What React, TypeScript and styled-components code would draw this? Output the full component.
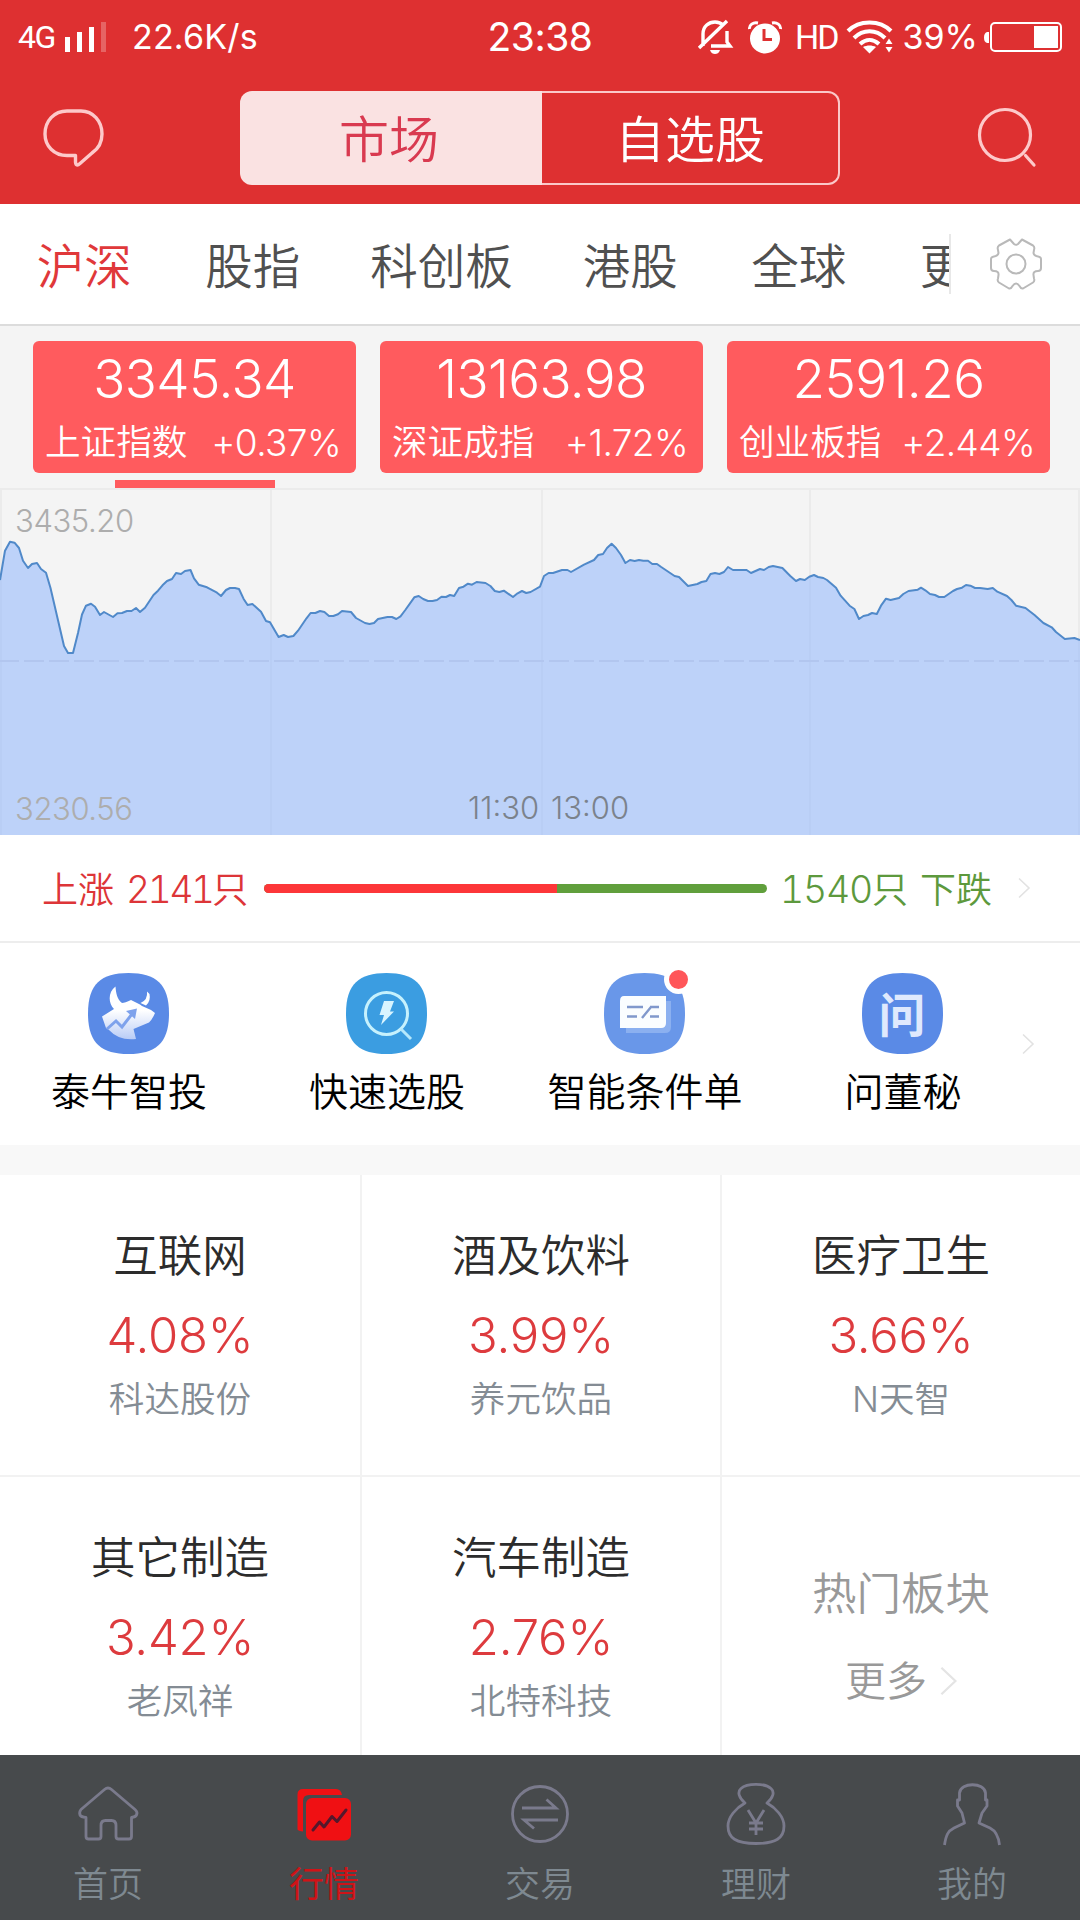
import React from "react";
import styled, { createGlobalStyle } from "styled-components";

const GlobalStyle = createGlobalStyle`
  * { box-sizing: border-box; }
  body { margin: 0; background: #fff; }
`;

const Screen = styled.div`
  width: 1080px;
  height: 1920px;
  display: flex;
  flex-direction: column;
  overflow: hidden;
  background: #fff;
  font-family: Inter, "Noto Sans CJK SC", sans-serif;
  font-weight: 350;
  white-space: nowrap;
`;

const Header = styled.header`
  height: 204px;
  flex: none;
  background: #de3031;
  color: #fff;
`;

const StatusBar = styled.div`
  height: 74px;
  display: grid;
  grid-template-columns: 1fr auto 1fr;
  align-items: center;
  padding: 0 18px;
`;

const StatusGroup = styled.div<{ $end?: boolean }>`
  display: flex;
  align-items: center;
  justify-content: ${(p) => (p.$end ? "flex-end" : "flex-start")};
`;

const StatusText = styled.span<{ $size: number; $ml?: number; $track?: number; $narrow?: boolean }>`
  font-family: ${(p) => (p.$narrow ? "Roboto" : "Inter")}, sans-serif;
  font-size: ${(p) => p.$size}px;
  font-weight: 400;
  line-height: 74px;
  margin-left: ${(p) => p.$ml ?? 0}px;
  letter-spacing: ${(p) => p.$track ?? 0}px;
`;

const Icon = styled.svg<{ $ml?: number }>`
  display: block;
  flex: none;
  overflow: visible;
  margin-left: ${(p) => p.$ml ?? 0}px;
`;

const TitleBar = styled.div`
  height: 130px;
  display: flex;
  align-items: flex-start;
  justify-content: space-between;
  padding: 17px 43px 0;
`;

const IconButton = styled.button<{ $pt: number }>`
  border: 0;
  background: none;
  padding: ${(p) => p.$pt}px 0 0;
  width: 62px;
`;

const Segmented = styled.div`
  width: 600px;
  height: 94px;
  display: flex;
`;

const Segment = styled.div<{ $active?: boolean }>`
  flex: none;
  width: ${(p) => (p.$active ? 302 : 298)}px;
  padding-right: ${(p) => (p.$active ? 4 : 0)}px;
  text-align: center;
  font-size: 50px;
  line-height: ${(p) => (p.$active ? 98 : 94)}px;
  color: ${(p) => (p.$active ? "#d93a50" : "#fff")};
  background: ${(p) => (p.$active ? "#fae2e2" : "transparent")};
  border: ${(p) => (p.$active ? 0 : 2)}px solid #fbc8c9;
  border-left: 0;
  border-radius: ${(p) => (p.$active ? "12px 0 0 12px" : "0 12px 12px 0")};
`;

const MarketTabs = styled.nav`
  height: 122px;
  flex: none;
  display: flex;
  align-items: center;
  border-bottom: 2px solid #dcdcdc;
`;

const TabScroller = styled.div`
  width: 951px;
  height: 60px;
  display: flex;
  overflow: hidden;
  border-right: 2px solid #e8e8e8;
`;

const MarketTab = styled.div<{ $wide?: boolean; $active?: boolean }>`
  flex: none;
  width: ${(p) => (p.$wide ? 209 : 168.5)}px;
  text-align: center;
  font-size: 47.5px;
  line-height: 66px;
  color: ${(p) => (p.$active ? "#e0383a" : "#505050")};
`;

const SettingsButton = styled.button`
  flex: 1;
  height: 60px;
  display: flex;
  justify-content: center;
  align-items: center;
  border: 0;
  padding: 0;
  background: none;
`;

const IndexPanel = styled.section`
  height: 162px;
  flex: none;
  padding: 15px 30px 0 33px;
  background: #f4f4f4;
`;

const IndexCards = styled.div`
  display: grid;
  grid-template-columns: repeat(3, 323px);
  column-gap: 24px;
`;

const IndexCard = styled.div`
  height: 132px;
  border-radius: 6px;
  background: #ff5b5e;
  color: #fff;
`;

const IndexValue = styled.div`
  height: 74px;
  line-height: 77px;
  text-align: center;
  font-size: 53px;
  letter-spacing: -0.6px;
`;

const IndexMeta = styled.div`
  display: flex;
  justify-content: space-between;
  padding: 0 15px 0 12px;
  line-height: 56px;
`;

const IndexName = styled.span`
  font-size: 35.6px;
`;

const IndexChange = styled.span`
  font-size: 37px;
  letter-spacing: -0.6px;
`;

const ActiveMark = styled.div`
  width: 160px;
  height: 8px;
  margin: 7px 0 0 82px;
  background: #ff5b5e;
`;

const ChartBox = styled.section`
  position: relative;
  height: 347px;
  flex: none;
  background: #f4f4f4;
`;

const ChartLabel = styled.span<{ $x: number; $y: number; $dark?: boolean }>`
  position: absolute;
  left: ${(p) => p.$x}px;
  top: ${(p) => p.$y}px;
  font-size: 31px;
  font-weight: 300;
  line-height: 36px;
  letter-spacing: ${(p) => (p.$dark ? 0 : -0.4)}px;
  color: ${(p) => (p.$dark ? "#7b828c" : "#adadad")};
`;

const BreadthRow = styled.section`
  height: 108px;
  flex: none;
  display: flex;
  align-items: center;
  padding: 0 50px 0 42px;
  border-bottom: 2px solid #ededed;
`;

const BreadthText = styled.span<{ $down?: boolean }>`
  display: flex;
  flex: none;
  align-items: baseline;
  gap: 12px;
  width: ${(p) => (p.$down ? "auto" : "222px")};
  margin-left: ${(p) => (p.$down ? "auto" : 0)};
  font-size: 36px;
  line-height: 106px;
  padding-top: 4px;
  color: ${(p) => (p.$down ? "#5d993d" : "#dd3538")};
`;

const Count = styled.span`
  display: flex;
  align-items: baseline;
`;

const CountNumber = styled.span<{ $track: number }>`
  font-size: 37.5px;
  font-variant-numeric: tabular-nums;
  letter-spacing: ${(p) => p.$track}px;
`;

const BreadthBar = styled.div`
  display: flex;
  flex: none;
  width: 503px;
  height: 9px;
  border-radius: 5px;
  overflow: hidden;
  background: #609f3c;
`;

const BreadthUp = styled.div`
  background: #fd3639;
`;

const Shortcuts = styled.section`
  height: 202px;
  flex: none;
  display: flex;
  align-items: flex-start;
  margin-left: -1px;
  padding-top: 30px;
`;

const Shortcut = styled.div`
  width: 258px;
  display: flex;
  flex-direction: column;
  align-items: center;
`;

const ShortcutTile = styled.div`
  position: relative;
  width: 81px;
  height: 81px;
`;

const TileGlyph = styled.span`
  position: absolute;
  inset: 0;
  text-align: center;
  font-size: 47px;
  line-height: 83px;
  font-weight: 700;
  color: #dfe9fd;
`;

const Badge = styled.span`
  position: absolute;
  right: -8px;
  top: -8px;
  width: 29px;
  height: 29px;
  border: 5px solid #fff;
  border-radius: 50%;
  background: #ff5659;
`;

const ShortcutName = styled.div`
  font-size: 39px;
  line-height: 50px;
  margin-top: 13px;
  padding-left: 2px;
  color: #000;
`;

const ShortcutMore = styled.div`
  padding-top: 61px;
`;

const Divider = styled.div`
  height: 30px;
  flex: none;
  background: #f8f8f8;
`;

const SectorGrid = styled.section`
  height: 580px;
  flex: none;
  display: grid;
  grid-template-columns: 362px 360px 358px;
  grid-template-rows: 302px 278px;
`;

const Sector = styled.div<{ $last?: boolean; $bottom?: boolean }>`
  display: flex;
  flex-direction: column;
  align-items: center;
  padding-top: 51px;
  border-right: ${(p) => (p.$last ? 0 : 2)}px solid #f2f2f2;
  border-bottom: ${(p) => (p.$bottom ? 0 : 2)}px solid #f2f2f2;
`;

const SectorName = styled.div`
  font-size: 44.5px;
  line-height: 60px;
  color: #2c2c2c;
`;

const SectorChange = styled.div`
  font-size: 49px;
  line-height: 60px;
  margin-top: 20px;
  letter-spacing: -0.2px;
  color: #dd3b3e;
`;

const SectorLeader = styled.div`
  font-size: 35.6px;
  line-height: 50px;
  margin-top: 9px;
  color: #848c94;
`;

const HotName = styled.div`
  font-size: 44.5px;
  line-height: 60px;
  margin-top: 36px;
  color: #999;
`;

const HotMore = styled.div`
  display: flex;
  align-items: center;
  font-size: 41px;
  line-height: 60px;
  margin-top: 27px;
  color: #999;
`;

const BottomNav = styled.nav`
  height: 165px;
  flex: none;
  display: grid;
  grid-template-columns: repeat(5, 216px);
  background: #474a4c;
`;

const NavItem = styled.div<{ $active?: boolean }>`
  display: flex;
  flex-direction: column;
  align-items: center;
  padding-top: 24px;
  font-weight: ${(p) => (p.$active ? 400 : 350)};
  color: ${(p) => (p.$active ? "#cf1317" : "#7e8991")};
`;

const NavLabel = styled.span`
  font-size: 35px;
  line-height: 48px;
  margin-top: 13px;
`;

const PRICE_POINTS =
  "0,92 5,62.7 10,53.7 14.5,54.7 19,60 23,72.7 28,80 32,76 37,75 41,81 46,84.7 50.5,100 64,158 68,165 73,165 78,145 82,126.5 86,117.7 91,115.7 95,118.7 100,127 104,124 113,129 117.5,125.3 122,125 127,123 131.5,123 136,120 140,124 145,119.7 153.5,107 158,102.7 162.5,97.3 167,93 172,91 176,85 181,86 185,83 190.5,82 194,90.3 198.7,96.7 207,99.3 217,104.7 221,108 226,102 230,100 235,100 239,101 243.5,110.7 247.6,117 252.4,116 261,123.7 266,133 270,134.3 278.6,149 283.7,147 288,149 293.4,148 298,142.7 306.5,130.3 310.6,125 315.4,125 320,123 324.4,124 329,128 333.3,128 338,126.3 342,123 351,124 356,130 365,135 369.5,136 374,135 378,131 387.4,129 392,129 396.3,131 400.5,128.3 405.3,122 414.3,109.3 418.7,108 423.2,111 428,113 432.5,113 437,112 441.5,108.7 446,109 450,107 454.2,108 459,100 463.5,98.7 468,95.7 472,96.7 476.6,94 485.5,95 490.4,98 494.8,103 499.3,104 503.8,102.7 513,109 517.6,105.3 522,103 526.2,105 530.6,104 540,98.7 544,88 548.6,85 553,85 562,82 567.5,82 571,84 584,76.7 594,72 598.2,67 603,66 607,60 611.6,55.7 616,60 621,67 625.4,75 630,72 634.7,73 639,72 643.3,72.7 648,72.7 652.3,76 657,76 661.2,79 674.6,88 679,89 688,98 697.4,96 701.5,94 706.3,93 710.5,86 715,85 719.4,86 724,84 728,79 733,82 746.6,82 751,85 760,81 764,82 768.7,79 773,78 782.4,80 790.3,88 796,93 800,91 804.8,92 809.3,88.7 814,87 818,89 823.4,90 827,92 836,99.7 840.6,107.7 849.6,117.7 854.4,121 859,131 863.4,128 868,127 872,125 876.8,126 881,117.7 886,110.7 890.6,112 899,110 903.3,106 908.5,103 917.8,101.7 921,99.7 925.3,102.3 930,106 935,107 939,109 944.3,109 953,103 957,101 962,99.7 966,97 970.4,97.7 975,100 980,100 987.7,101 992.8,100 997.3,103.7 1007,108 1011.4,112 1016,117.7 1025.5,120 1034.5,127 1043.4,135 1051.7,139.3 1056,144 1064.8,151 1074.4,150 1080,152";

const SignalIcon = () => (
  <Icon $ml={10} width="42" height="30" viewBox="0 0 42 30" fill="#fff">
    <rect x="0" y="15" width="5" height="15" />
    <rect x="12" y="10" width="5" height="20" />
    <rect x="24" y="5" width="5" height="25" />
    <rect x="36" y="0" width="5" height="30" opacity="0.25" />
  </Icon>
);

const MuteIcon = () => (
  <Icon width="34" height="34" viewBox="0 0 34 34" fill="none" stroke="#fff" strokeWidth="3.400">
    <path d="M5 26V14C5 6 11 2 17 2c4 0 6 1 8 3M29 11v11l3 4H13M1 28L29 1" />
    <path d="M12 30h10c-1 3-3 4-5 4s-4-1-5-4z" fill="#fff" stroke="none" />
  </Icon>
);

const AlarmIcon = () => (
  <Icon $ml={16} width="34" height="33" viewBox="0 0 34 33">
    <circle cx="17" cy="17.5" r="15" fill="#fff" />
    <path d="M1.5 8C1 4 5 1 10 2M32.500 8C33 4 29 1 24 2" stroke="#fff" strokeWidth="3" fill="none" />
    <path d="M16 8v10.500h8" stroke="#de3031" strokeWidth="3" fill="none" />
  </Icon>
);

const WifiIcon = () => (
  <Icon $ml={9} width="46" height="34" viewBox="0 0 46 34" fill="none" stroke="#fff" strokeWidth="4">
    <path d="M1 11C12-.5 33-.5 44 11M7 18c9-9 22-9 31 0M13 24c6-5.500 13-5.500 19 0" />
    <path d="M16 27c4-2 9-2 13 0l-6.500 6.500z" fill="#fff" stroke="none" />
    <path d="M38.500 24l3.500-5.500 3.500 5.500zM38.500 27l3.500 5.500 3.500-5.500z" fill="#fff" stroke="none" />
  </Icon>
);

const BatteryIcon = () => (
  <Icon $ml={6} width="78" height="30" viewBox="0 0 78 30">
    <path d="M5 10H3Q0 11 0 15.500T3 21H5z" fill="#fff" />
    <rect x="7" y="1" width="70" height="28" rx="4" fill="none" stroke="#fff" strokeWidth="2" />
    <rect x="50" y="4" width="24" height="22" fill="#fff" />
  </Icon>
);

const ChatIcon = () => (
  <Icon width="62" height="58" viewBox="0 0 62 58" fill="none" stroke="#fdc9ca" strokeWidth="3.400" strokeLinejoin="round">
    <path d="M24 2H38C50 2 59 12 59 25C59 34 55 40 49 44L37 54.500Q33 58 32.500 53V46.500H24C11 46.500 2 37 2 25C2 12 11 2 24 2z" />
  </Icon>
);

const SearchIcon = () => (
  <Icon $ml={3} width="59" height="59" viewBox="0 0 59 59" fill="none" stroke="#fdc9ca" strokeWidth="3.200" strokeLinecap="round">
    <ellipse cx="27" cy="27" rx="25.500" ry="25.500" />
    <path d="M47.500 47.500L56 57" />
  </Icon>
);

const GearIcon = () => (
  <Icon width="52" height="52" viewBox="0 0 52 52" fill="none" stroke="#b9b9b9" strokeWidth="2" strokeLinejoin="round">
    <path d="M20 1.500L24 6q2 1.500 4 0L32 1.500 43 7.500Q45 9 44 12L43.500 15Q44 18 48 18.500 51 19 51 21V30Q51 33 48 33 43 33 43.500 37L44 40.500Q45 43 43 44.500L33 50.500Q31 51 29.500 48 26 43 22.500 48 21 51 19 50.500L9 44.500Q7 43 8 40.500L8.500 37Q9 33 4 33 1 33 1 30V21Q1 19 4 18.500 8 18 8.500 15L8 12Q7 9 9 7.500z" />
    <circle cx="26" cy="26" r="9.500" />
  </Icon>
);

const ChevronIcon = ({ ml, size = 20, color = "#e2e2e2" }: { ml: number; size?: number; color?: string }) => (
  <Icon $ml={ml} width={size * 0.6} height={size} viewBox="0 0 12 20" fill="none" stroke={color} strokeWidth="1.600">
    <path d="M1 .5L11 10L1 19.500" />
  </Icon>
);

const TILE = "M40.500 0C68 0 81 11 81 40.500S68 81 40.500 81 0 70 0 40.500 13 0 40.500 0z";

const BullTile = () => (
  <Icon width="81" height="81" viewBox="0 0 81 81">
    <defs>
      <linearGradient id="bull" x1="0" y1="0" x2="0" y2="1">
        <stop offset="0.450" stopColor="#fff" />
        <stop offset="1" stopColor="#b9ccf6" />
      </linearGradient>
    </defs>
    <path d={TILE} fill="#5a8ae6" />
    <path fill="url(#bull)" d="M27.500 13.500C20 19 20 30 26 36L14 43.500L18 55L21 57Q31 68 48 66L45.500 56L61 49.500Q64 47 67 40L63 37L54 33L52 31.500L43 27Q37 30 34 30C29 26 28 20 27.500 13.500z" />
    <path fill="#fff" d="M59 18.500Q60 27 52.500 30L58 32.500Q63 28 61.500 21z" />
    <path d="M19 56L28 48L34 54L44 41" fill="none" stroke="#7ea2ec" strokeWidth="3" />
    <path d="M38 38L49 35.500L47 46z" fill="#7ea2ec" />
  </Icon>
);

const FastTile = () => (
  <Icon width="81" height="81" viewBox="0 0 81 81">
    <path d={TILE} fill="#3b9de1" />
    <circle cx="40.500" cy="40.500" r="21" fill="none" stroke="#c6f1fd" strokeWidth="3" />
    <path d="M55 56L65 66" stroke="#b5e8fc" strokeWidth="3" />
    <path d="M38 28H48L44 38.500H48L35 52L38 42H33.500z" fill="#d8f4ff" />
  </Icon>
);

const OrderTile = () => (
  <Icon width="81" height="81" viewBox="0 0 81 81">
    <path d={TILE} fill="#6997e9" />
    <path d="M22 28H67V54Q67 60 61 60H22z" fill="#8bb0f0" />
    <path d="M20 23H62V50Q62 55 57 55H16V28Q16 23 20 23z" fill="#fafdff" />
    <path d="M23 34H39M46 34H55M23 43.500H33M46 43.500H55M38 45L47 34" stroke="#8098cc" strokeWidth="2.400" fill="none" />
  </Icon>
);

const BlankTile = () => (
  <Icon width="81" height="81" viewBox="0 0 81 81">
    <path d={TILE} fill="#5a8ae6" />
  </Icon>
);

const NavSvg = ({ children }: { children: React.ReactNode }) => (
  <Icon width="64" height="68" viewBox="0 0 64 68" fill="none" stroke="#7a7a8c" strokeWidth="2.800" strokeLinejoin="round">
    {children}
  </Icon>
);

const HomeIcon = () => (
  <NavSvg>
    <path d="M28.500 10.500Q32 7.500 35.500 10.500L59 30.500Q62 33 60.500 36Q59.500 38 55.500 38.500V57.500Q55.500 60 53 60H42.500Q40 60 40 57.500V46.500Q40 41.500 35.500 41.500H29.500Q25 41.500 25 46.500V57.500Q25 60 22.500 60H12.500Q10 60 10 57.500V38.500Q5 38 4 36Q3 33 5 30.500z" />
  </NavSvg>
);

const QuotesIcon = () => (
  <NavSvg>
    <path d="M5.500 50.500V15.500Q5.500 10 11 10H44Q49 10 50 16H17Q11 16 11 22V52.500Q6.500 52 5.500 50.500z" fill="#f01013" stroke="none" />
    <rect x="14" y="19" width="45" height="42.500" rx="6" fill="#f01013" stroke="none" />
    <path d="M21 51L27.500 43L32 48L40 37.500L45 42.500L54 31" stroke="#55182c" strokeWidth="3" strokeLinecap="round" />
  </NavSvg>
);

const TradeIcon = () => (
  <NavSvg>
    <circle cx="32" cy="35" r="27.500" />
    <path d="M14 29H48L38.500 20.500M50 41H16L26 49.500" strokeLinejoin="miter" />
  </NavSvg>
);

const WealthIcon = () => (
  <NavSvg>
    <path d="M21 24C15 19 13 13 17 9.500C23 4 41 4 47 9.500C51 13 49 19 43 24C52 29 60 38 60 47C60 59 52 64.500 32 64.500S4 59 4 47C4 38 12 29 21 24z" />
    <path d="M24 31L32 44L40 31M25 44H39M25 50H39M32 44V56" />
  </NavSvg>
);

const ProfileIcon = () => (
  <NavSvg>
    <path d="M4.500 66C6 56 8 52 14 49L24.500 44L22 34L17.500 27V21H19.500V14C20.500 3 44.500 3 45.500 14V21H47V27L42 34L39 44L50 49C56 52 58.500 57 59.500 66" />
  </NavSvg>
);

const indices = [
  { value: "3345.34", name: "上证指数", change: "+0.37%" },
  { value: "13163.98", name: "深证成指", change: "+1.72%" },
  { value: "2591.26", name: "创业板指", change: "+2.44%" },
];

const sectors = [
  { name: "互联网", change: "4.08%", leader: "科达股份" },
  { name: "酒及饮料", change: "3.99%", leader: "养元饮品" },
  { name: "医疗卫生", change: "3.66%", leader: "N天智" },
  { name: "其它制造", change: "3.42%", leader: "老凤祥" },
  { name: "汽车制造", change: "2.76%", leader: "北特科技" },
];

const shortcuts = [
  { name: "泰牛智投", icon: <BullTile /> },
  { name: "快速选股", icon: <FastTile /> },
  { name: "智能条件单", icon: <OrderTile />, badge: true },
  { name: "问董秘", icon: <BlankTile />, glyph: "问" },
];

const navItems = [
  { name: "首页", icon: <HomeIcon /> },
  { name: "行情", icon: <QuotesIcon />, active: true },
  { name: "交易", icon: <TradeIcon /> },
  { name: "理财", icon: <WealthIcon /> },
  { name: "我的", icon: <ProfileIcon /> },
];

const marketTabs = ["沪深", "股指", "科创板", "港股", "全球", "更多"];

const advancing = 2141;
const declining = 1540;

const PriceChart = () => (
  <ChartBox>
    <Icon width="1080" height="347" viewBox="0 0 1080 347">
      <path d="M0 1H1080M1 2V347M271 2V347M542 2V347M810 2V347M1079 2V347" stroke="#ebebeb" strokeWidth="2" />
      <polygon points={`0,347 ${PRICE_POINTS} 1080,347`} fill="rgba(151,186,252,0.6)" />
      <path d="M-1 173H1080" stroke="#b2c6ef" strokeWidth="2" strokeDasharray="20 5" />
      <polyline points={PRICE_POINTS} fill="none" stroke="#5089c9" strokeWidth="2" strokeLinejoin="round" />
    </Icon>
    <ChartLabel $x={15} $y={15}>3435.20</ChartLabel>
    <ChartLabel $x={15} $y={303}>3230.56</ChartLabel>
    <ChartLabel $x={468} $y={302} $dark>11:30</ChartLabel>
    <ChartLabel $x={551} $y={302} $dark>13:00</ChartLabel>
  </ChartBox>
);

export default function App() {
  return (
    <Screen>
      <GlobalStyle />
      <Header>
        <StatusBar>
          <StatusGroup>
            <StatusText $size={32} $track={-1.4} $narrow>4G</StatusText>
            <SignalIcon />
            <StatusText $size={34} $ml={25} $track={0.2}>22.6K/s</StatusText>
          </StatusGroup>
          <StatusText $size={39} $track={-0.5}>23:38</StatusText>
          <StatusGroup $end>
            <MuteIcon />
            <AlarmIcon />
            <StatusText $size={34} $ml={13} $track={-2} $narrow>HD</StatusText>
            <WifiIcon />
            <StatusText $size={34} $ml={10}>39%</StatusText>
            <BatteryIcon />
          </StatusGroup>
        </StatusBar>
        <TitleBar>
          <IconButton $pt={18}><ChatIcon /></IconButton>
          <Segmented>
            <Segment $active>市场</Segment>
            <Segment>自选股</Segment>
          </Segmented>
          <IconButton $pt={17}><SearchIcon /></IconButton>
        </TitleBar>
      </Header>

      <MarketTabs>
        <TabScroller>
          {marketTabs.map((t, i) => (
            <MarketTab key={t} $active={i === 0} $wide={t.length === 3}>{t}</MarketTab>
          ))}
        </TabScroller>
        <SettingsButton><GearIcon /></SettingsButton>
      </MarketTabs>

      <IndexPanel>
        <IndexCards>
          {indices.map((x) => (
            <IndexCard key={x.name}>
              <IndexValue>{x.value}</IndexValue>
              <IndexMeta>
                <IndexName>{x.name}</IndexName>
                <IndexChange>{x.change}</IndexChange>
              </IndexMeta>
            </IndexCard>
          ))}
        </IndexCards>
        <ActiveMark />
      </IndexPanel>

      <PriceChart />

      <BreadthRow>
        <BreadthText>
          <span>上涨</span>
          <Count><CountNumber $track={-2.7}>{advancing}</CountNumber>只</Count>
        </BreadthText>
        <BreadthBar>
          <BreadthUp style={{ width: `${(advancing / (advancing + declining)) * 100}%` }} />
        </BreadthBar>
        <BreadthText $down>
          <Count><CountNumber $track={-1.3}>{declining}</CountNumber>只</Count>
          <span>下跌</span>
        </BreadthText>
        <ChevronIcon ml={26} />
      </BreadthRow>

      <Shortcuts>
        {shortcuts.map((s) => (
          <Shortcut key={s.name}>
            <ShortcutTile>
              {s.icon}
              {s.glyph && <TileGlyph>{s.glyph}</TileGlyph>}
              {s.badge && <Badge />}
            </ShortcutTile>
            <ShortcutName>{s.name}</ShortcutName>
          </Shortcut>
        ))}
        <ShortcutMore><ChevronIcon ml={-9} /></ShortcutMore>
      </Shortcuts>

      <Divider />

      <SectorGrid>
        {sectors.map((s, i) => (
          <Sector key={s.name} $last={i === 2} $bottom={i > 2}>
            <SectorName>{s.name}</SectorName>
            <SectorChange>{s.change}</SectorChange>
            <SectorLeader>{s.leader}</SectorLeader>
          </Sector>
        ))}
        <Sector $last $bottom>
          <HotName>热门板块</HotName>
          <HotMore>更多<ChevronIcon ml={13} size={28} color="#e4e4e4" /></HotMore>
        </Sector>
      </SectorGrid>

      <BottomNav>
        {navItems.map((n) => (
          <NavItem key={n.name} $active={n.active}>
            {n.icon}
            <NavLabel>{n.name}</NavLabel>
          </NavItem>
        ))}
      </BottomNav>
    </Screen>
  );
}
